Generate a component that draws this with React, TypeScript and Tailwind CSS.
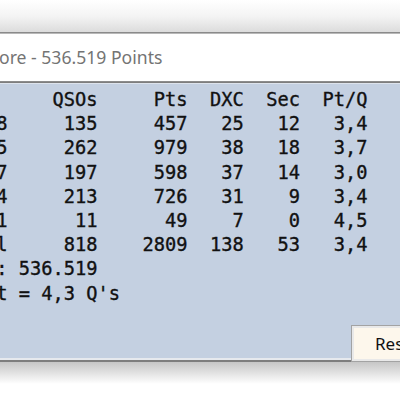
const rows: [string, string, string, string, string, string][] = [
  ["8", "135", "457", "25", "12", "3,4"],
  ["5", "262", "979", "38", "18", "3,7"],
  ["7", "197", "598", "37", "14", "3,0"],
  ["4", "213", "726", "31", "9", "3,4"],
  ["1", "11", "49", "7", "0", "4,5"],
  ["l", "818", "2809", "138", "53", "3,4"],
]

function line(r: [string, string, string, string, string, string]) {
  const [label, qsos, pts, dxc, sec, ptq] = r
  return label + qsos.padStart(8) + pts.padStart(8) + dxc.padStart(5) + sec.padStart(5) + ptq.padStart(6)
}

export default function App() {
  const lines = [
    "     QSOs     Pts  DXC  Sec  Pt/Q",
    ...rows.map(line),
    ": 536.519",
    "t = 4,3 Q's",
  ]

  return (
    <div className="w-[400px] h-[400px] overflow-hidden bg-white flex flex-col">
      <div className="h-[32px] shrink-0 bg-gradient-to-b from-white via-[#f4f4f4] to-[#dcdcdc]" />
      <div className="h-px shrink-0 bg-[#8a8a8a]" />
      <div className="h-px shrink-0 bg-[#b8b8b8]" />

      <div className="h-[47px] shrink-0 bg-white flex items-center">
        <span className="-ml-px text-[17.6px] text-[#747474] whitespace-nowrap" style={{ fontFamily: '"Noto Sans", sans-serif' }}>
          ore - 536.519 Points
        </span>
      </div>
      <div className="h-px shrink-0 bg-[#8c8c8c]" />
      <div className="h-px shrink-0 bg-[#7d7d7d]" />
      <div className="h-px shrink-0 bg-[#dde3ec]" />

      <div className="h-[278px] shrink-0 bg-[#c4d0e1] flex flex-col">
        <pre
          className="flex-1 pt-[4px] -ml-[3.75px] text-[18.7px] leading-[24.2px] text-[#111] [-webkit-text-stroke:0.35px_#111]"
          style={{ fontFamily: '"DejaVu Sans Mono", monospace' }}
        >
          {lines.join("\n")}
        </pre>
        <div className="h-[37px] flex">
          <div className="w-[351px] shrink-0 flex flex-col justify-end">
            <div className="h-[2px] bg-[#e6e9ee]" />
            <div className="h-[2px] bg-[#7e7e7e]" />
          </div>
          <div className="w-[90px] shrink-0 border border-[#a3a3a3] bg-[#e9e9e9] p-[2px]">
            <div className="h-full bg-[#fdf7ec] flex items-center pl-[21px]">
              <span className="text-[17px] text-[#111] whitespace-nowrap" style={{ fontFamily: '"Noto Sans", sans-serif' }}>
                Reset
              </span>
            </div>
          </div>
        </div>
      </div>

      <div className="h-[22px] shrink-0 bg-gradient-to-b from-[#c6c6c6] to-white" />
    </div>
  )
}
